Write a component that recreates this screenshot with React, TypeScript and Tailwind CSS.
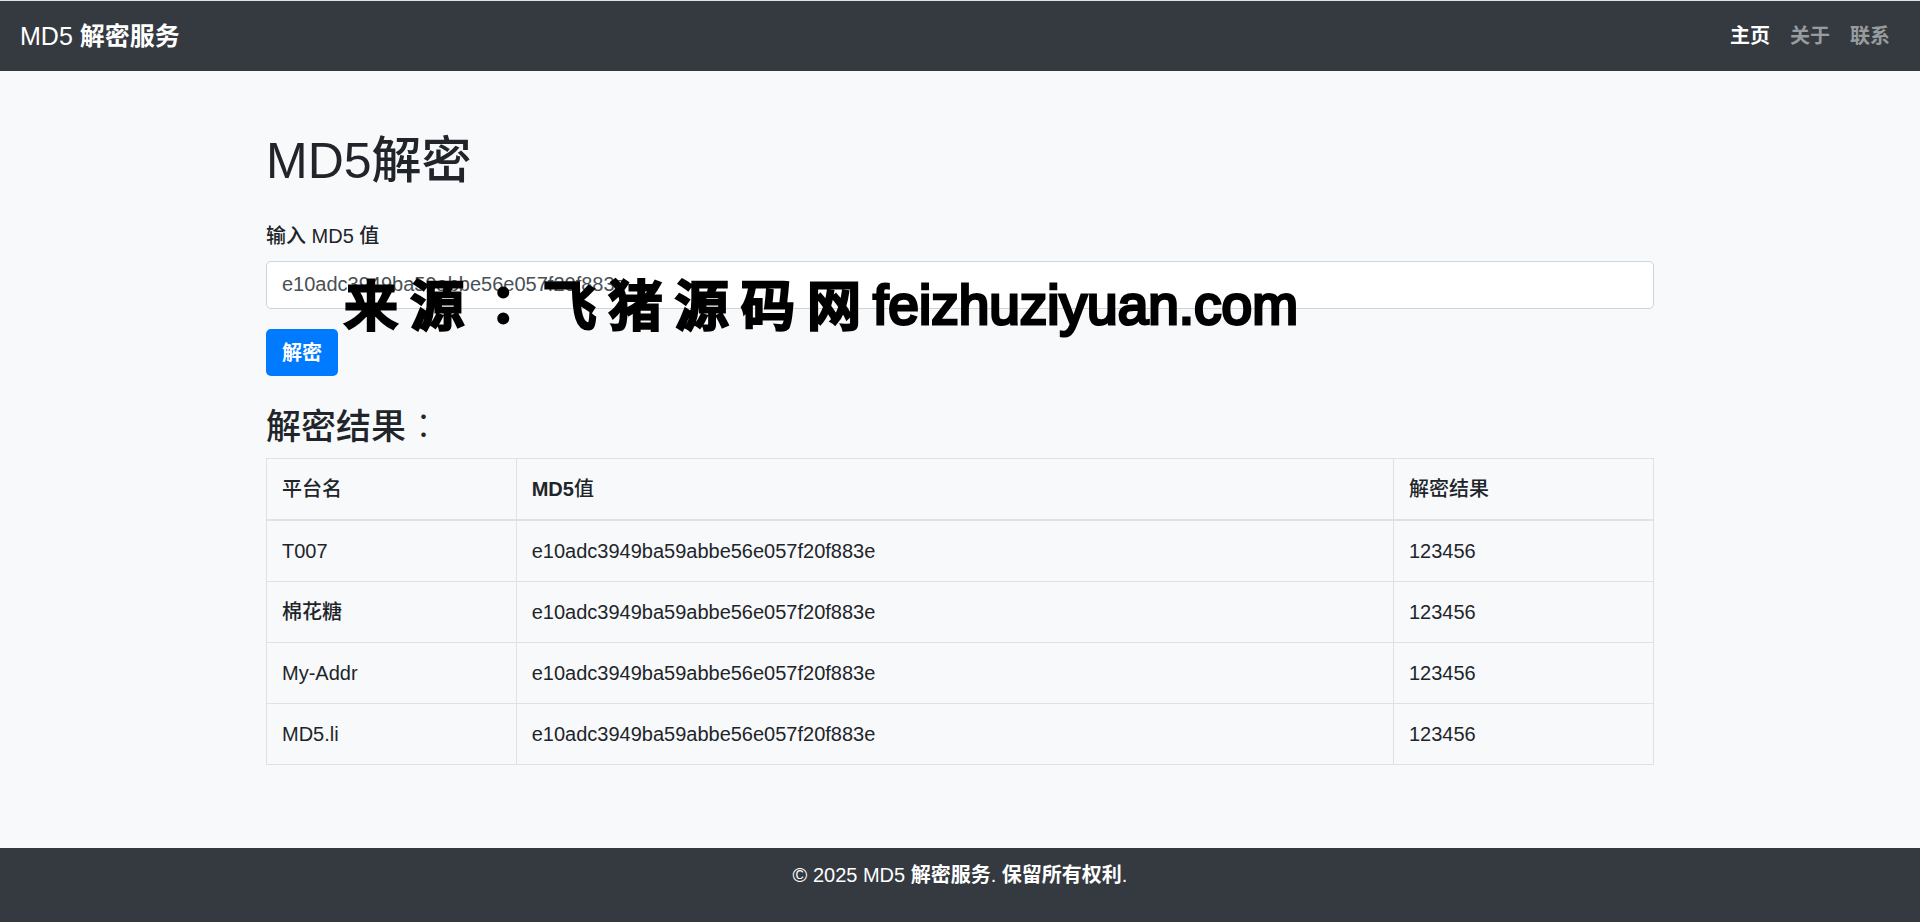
import { useState } from "react";

const HASH = "e10adc3949ba59abbe56e057f20f883e";

const links = [
  { label: "主页", active: true },
  { label: "关于", active: false },
  { label: "联系", active: false },
];

const platforms = ["T007", "棉花糖", "My-Addr", "MD5.li"];

const results = platforms.map((platform) => ({
  platform,
  hash: HASH,
  plain: "123456",
}));

function Navbar() {
  return (
    <header className="border-t border-[#dee2e6] bg-[#343a40]">
      <nav className="flex items-center justify-between px-5 py-[10px]">
        <a href="#" className="text-[25px] leading-[38px] text-white">
          MD5 <span className="font-bold">解密服务</span>
        </a>
        <ul className="flex font-bold">
          {links.map((link) => (
            <li key={link.label}>
              <a
                href="#"
                className={
                  link.active
                    ? "block px-[10px] py-[10px] text-white"
                    : "block px-[10px] py-[10px] text-white/50"
                }
              >
                {link.label}
              </a>
            </li>
          ))}
        </ul>
      </nav>
    </header>
  );
}

function Watermark() {
  return (
    <div className="pointer-events-none absolute left-[78px] top-3 flex items-end whitespace-nowrap text-black [-webkit-text-stroke:3px_black]">
      <span className="font-['Noto_Sans_CJK_TC',sans-serif] text-[54px] leading-[60px]">
        来 源 ： 飞 猪 源 码 网
      </span>
      <span className="pl-3 text-[55px] leading-[56px]">feizhuziyuan.com</span>
    </div>
  );
}

function DecryptForm() {
  const [value, setValue] = useState(HASH);
  return (
    <form onSubmit={(event) => event.preventDefault()}>
      <label htmlFor="md5" className="mb-[10px] block">
        输入 MD5 值
      </label>
      <div className="relative mb-5">
        <input
          id="md5"
          type="text"
          value={value}
          onChange={(event) => setValue(event.target.value)}
          className="block h-12 w-full rounded-[5px] border border-[#ced4da] bg-white px-[15px] pb-[2px] font-['Liberation_Sans',sans-serif] font-normal text-[#495057]"
        />
        <Watermark />
      </div>
      <button type="submit" className="block h-[47px] rounded-[5px] bg-[#007bff] px-4 font-bold text-white">
        解密
      </button>
    </form>
  );
}

function ResultTable() {
  const cell = "border border-[#dee2e6] px-[15px] py-[15px] text-left";
  return (
    <table className="w-full table-fixed border-collapse border border-[#dee2e6]">
      <colgroup>
        <col className="w-[18%]" />
        <col />
        <col className="w-[18.75%]" />
      </colgroup>
      <thead>
        <tr className="border-b-2 border-[#dee2e6]">
          <th className={`${cell} font-medium`}>平台名</th>
          <th className={`${cell} font-medium`}>
            <span className="font-bold">MD5</span>值
          </th>
          <th className={`${cell} font-medium`}>解密结果</th>
        </tr>
      </thead>
      <tbody>
        {results.map((row) => (
          <tr key={row.platform}>
            <td className={cell}>{row.platform}</td>
            <td className={cell}>{row.hash}</td>
            <td className={cell}>{row.plain}</td>
          </tr>
        ))}
      </tbody>
    </table>
  );
}

export default function App() {
  return (
    <div className="flex min-h-screen flex-col bg-[#f8f9fb] font-['Liberation_Sans','Noto_Sans_CJK_SC',sans-serif] text-[20px] font-medium leading-[30px] text-[#212529]">
      <Navbar />
      <main className="mx-auto w-full max-w-[1388px] flex-1 pb-15 pt-15">
        <h1 className="mb-[30px] text-[50px] leading-[60px]">MD5解密</h1>
        <DecryptForm />
        <h3 className="mb-[10px] mt-[30px] text-[35px] leading-[42px]">
          解密结果
          <span className="font-['Noto_Sans_CJK_TC',sans-serif] font-light leading-none">：</span>
        </h3>
        <ResultTable />
      </main>
      <footer className="bg-[#343a40] pb-8 pt-3 text-center text-white">
        <p>
          © 2025 MD5 <span className="font-bold">解密服务</span>. <span className="font-bold">保留所有权利</span>.
        </p>
      </footer>
    </div>
  );
}
